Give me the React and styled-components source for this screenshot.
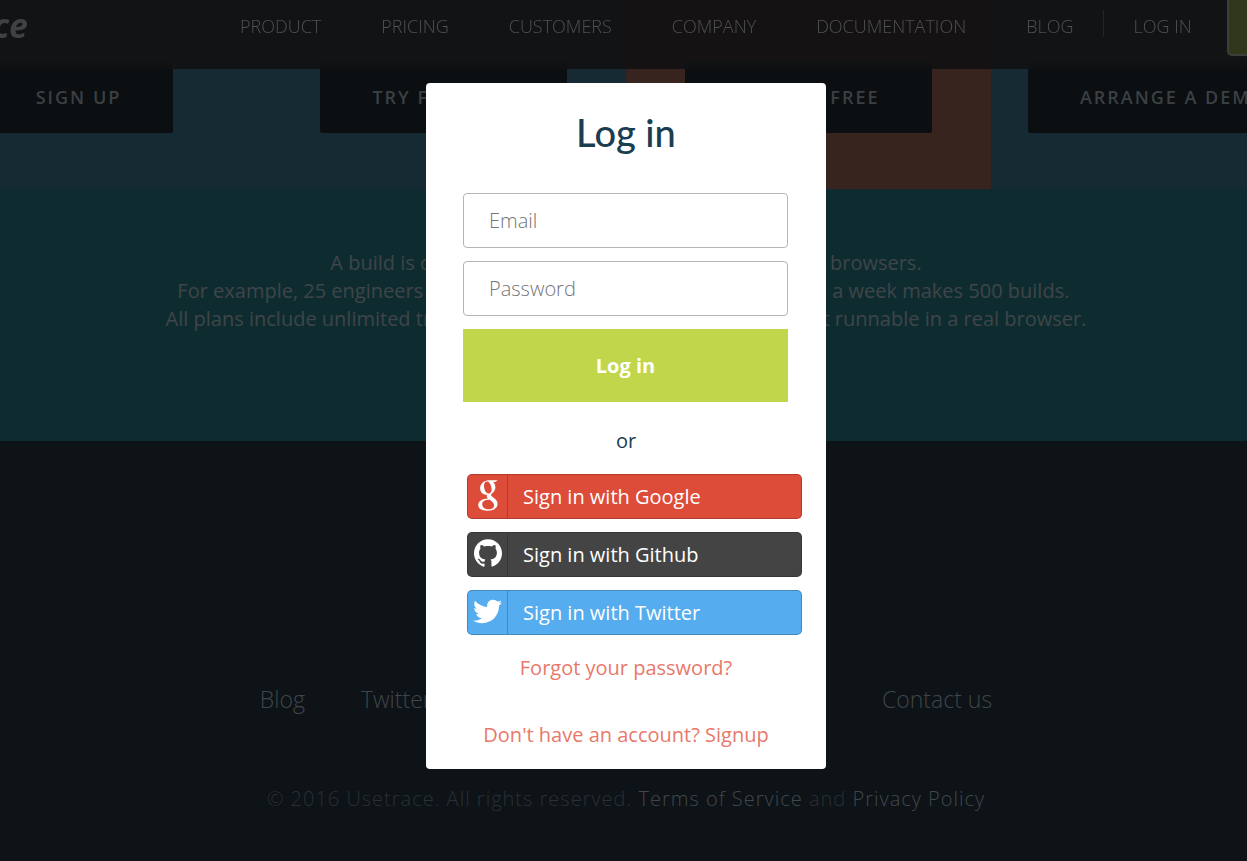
import React from 'react';
import styled, { createGlobalStyle, css } from 'styled-components';
import { SiGithub } from 'react-icons/si';
import { FaTwitter } from 'react-icons/fa';

const navItems = ['Product', 'Pricing', 'Customers', 'Company', 'Documentation', 'Blog'];

const plans = [
	{ action: 'Sign up' },
	{ action: 'Try for free' },
	{ action: 'Try for free', highlighted: true },
	{ action: 'Arrange a demo' },
];

const footerLinks = ['Blog', 'Twitter', 'Instagram', 'Customer Stories', 'Contact us'];

const GoogleIcon = () => (
	<svg width="20" height="31" viewBox="0 0 20 31" aria-hidden="true">
		<path
			fill="#fff"
			fillRule="evenodd"
			d="M19.7 .2 L17.4 2 H15 C16.6 3.2 17.4 5 17.4 7.2 C17.4 9.9 16.1 11.6 14.5 12.9 C13.4 13.8 13.1 14.3 13.1 15 C13.1 15.8 13.8 16.4 15 17.3 C17.9 19.4 19.6 21.1 19.6 24.1 C19.6 27.8 15.9 30.8 9.6 30.8 C3.8 30.8 .2 28.5 .2 25 C.2 21.3 4 18.8 10 18.5 C9.3 17.8 8.8 17.1 8.8 16.2 C8.8 15.7 8.9 15.3 9.1 14.8 C5 15 2.1 12.1 2.1 8.3 C2.1 4 5.7 .2 10.9 .2 Z M9 1.5 C7.1 1.5 6 3.3 6 5.8 C6 9.4 7.8 13.6 10.5 13.6 C12.6 13.6 13.6 12 13.6 9.7 C13.6 6.2 11.8 1.5 9 1.5 Z M11.3 19.8 C7.2 19.8 4.2 21.1 4.2 24.2 C4.2 27.3 6.9 29.3 10.8 29.3 C14.1 29.3 16.1 27.8 16.1 25.5 C16.1 23.2 14.8 22 12.2 19.9 Z"
		/>
	</svg>
);

const providers = [
	{ name: 'Google', color: '#dd4b39', icon: <GoogleIcon /> },
	{ name: 'Github', color: '#444444', icon: <SiGithub size={28} /> },
	{ name: 'Twitter', color: '#55acee', icon: <FaTwitter size={29} /> },
];

const App = () => (
	<>
		<GlobalStyle />
		<Header>
			<Logo href="#">usetrace</Logo>
			<Nav>
				{navItems.map((item) => (
					<NavLink href="#" key={item}>{item}</NavLink>
				))}
			</Nav>
			<Divider />
			<NavLink href="#">Log in</NavLink>
			<TrialButton type="button" aria-label="Sign up" />
		</Header>
		<main>
			<Plans>
				{plans.map((plan, index) => (
					<Plan key={index} highlighted={plan.highlighted}>
						<PlanButton type="button">{plan.action}</PlanButton>
					</Plan>
				))}
			</Plans>
			<Info>
				A build is one batch of traces run in one or more web browsers.<br />
				For example, 25 engineers committing new code 4 times a day, 5 days a week makes 500 builds.&nbsp;<br />
				All plans include unlimited traces. A trace is an automated testing script runnable in a real browser.
			</Info>
		</main>
		<Footer>
			<FooterNav>
				{footerLinks.map((link) => (
					<FooterLink href="#" key={link}>{link}</FooterLink>
				))}
			</FooterNav>
			<Copyright>
				© 2016 Usetrace. All rights reserved. <LegalLink href="#">Terms of Service</LegalLink> and{' '}
				<LegalLink href="#">Privacy Policy</LegalLink>
			</Copyright>
		</Footer>
		<Overlay>
			<Modal role="dialog" aria-labelledby="login-title">
				<Title id="login-title">Log in</Title>
				<Form onSubmit={(event) => event.preventDefault()}>
					<Input type="email" placeholder="Email" aria-label="Email" />
					<Input type="password" placeholder="Password" aria-label="Password" />
					<SubmitButton type="submit">Log in</SubmitButton>
				</Form>
				<Or>or</Or>
				<Providers>
					{providers.map(({ name, color, icon }) => (
						<ProviderButton type="button" color={color} key={name}>
							<ProviderIcon>{icon}</ProviderIcon>
							Sign in with {name}
						</ProviderButton>
					))}
				</Providers>
				<ModalLinks>
					<ModalLink href="#">Forgot your password?</ModalLink>
					<ModalLink href="#">Don't have an account? Signup</ModalLink>
				</ModalLinks>
			</Modal>
		</Overlay>
	</>
);

const GlobalStyle = createGlobalStyle`
	* {
		box-sizing: border-box;
	}

	body {
		margin: 0;
		background-color: #0d1317;
		font-family: 'Open Sans', sans-serif;
		overflow: hidden;
	}

	button, input {
		font-family: inherit;
	}

	a {
		text-decoration: none;
	}
`;

const Header = styled.header`
	position: fixed;
	top: 0;
	left: 0;
	right: 0;
	z-index: 1;
	display: flex;
	height: 69px;
	padding-top: 10px;
	background-color: rgba(17, 17, 18, 0.92);
`;

const Logo = styled.a`
	display: flex;
	justify-content: flex-end;
	width: 28px;
	margin-right: 212px;
	overflow: hidden;
	font-size: 34px;
	font-style: italic;
	font-weight: 700;
	line-height: 30px;
	color: #404142;
`;

const Nav = styled.nav`
	display: flex;
	gap: 60px;
`;

const NavLink = styled.a`
	font-size: 18px;
	font-weight: 300;
	line-height: 32px;
	color: #505152;
	text-transform: uppercase;
	white-space: nowrap;
`;

const Divider = styled.div`
	width: 1px;
	height: 27px;
	margin: 0 29px 0 30px;
	background-color: #242526;
`;

const TrialButton = styled.button`
	flex: 1;
	height: 56px;
	margin: -10px 0 0 35px;
	padding: 0;
	border: solid #3c3e3a;
	border-width: 0 0 2px 2px;
	border-radius: 0 0 0 5px;
	background-color: #31371a;
`;

const Plans = styled.section`
	display: flex;
	justify-content: center;
	padding-left: 5px;
	overflow: hidden;
	background-color: #162a33;
`;

const Plan = styled.div`
	display: flex;
	flex: none;
	justify-content: center;
	width: 365px;
	padding: 62px 0 56px;
	${(props) => props.highlighted && css`
		background-color: #38241f;
	`}
`;

const PlanButton = styled.button`
	height: 71px;
	padding: 0 52px 2px;
	border: 0;
	border-radius: 2px;
	background-color: #0b0f12;
	font-size: 18px;
	font-weight: 600;
	letter-spacing: 2px;
	color: #3b4043;
	text-transform: uppercase;
	white-space: nowrap;
`;

const Info = styled.p`
	margin: 0;
	padding: 60px 0 108px 5px;
	background-color: #0e2c30;
	font-size: 20px;
	line-height: 28px;
	color: #3f4548;
	text-align: center;
`;

const Footer = styled.footer`
	padding: 240px 0 44px 5px;
	background-color: #0d1317;
	text-align: center;
`;

const FooterNav = styled.nav`
	display: flex;
	justify-content: center;
	gap: 56px;
	margin-bottom: 64px;
`;

const FooterLink = styled.a`
	font-size: 23px;
	font-weight: 300;
	line-height: 36px;
	color: #414548;
	white-space: nowrap;
`;

const Copyright = styled.p`
	margin: 0;
	font-size: 20px;
	font-weight: 300;
	line-height: 36px;
	letter-spacing: 1px;
	color: #2b3033;
`;

const LegalLink = styled.a`
	color: #43474a;
`;

const Overlay = styled.div`
	position: fixed;
	inset: 0;
	z-index: 2;
	display: flex;
	align-items: flex-start;
	justify-content: center;
	padding: 83px 0 0 5px;
`;

const Modal = styled.div`
	width: 400px;
	padding: 27px 0 19px;
	border-radius: 4px;
	background-color: #ffffff;
`;

const Title = styled.h2`
	margin: 0 0 39px;
	font-family: Lato, sans-serif;
	font-size: 38px;
	font-weight: 500;
	line-height: 44px;
	color: #1b3d50;
	text-align: center;
`;

const Form = styled.form`
	display: flex;
	flex-direction: column;
	gap: 13px;
	padding: 0 38px 0 37px;
`;

const Input = styled.input`
	height: 55px;
	padding: 0 25px;
	border: 1px solid #b5b5b5;
	border-radius: 4px;
	background-color: #ffffff;
	font-size: 20px;
	font-weight: 300;

	&::placeholder {
		color: #757575;
	}
`;

const SubmitButton = styled.button`
	height: 73px;
	border: 0;
	background-color: #c1d64a;
	font-size: 20px;
	font-weight: 700;
	color: #ffffff;
`;

const Or = styled.p`
	margin: 24px 0 18px;
	font-size: 20px;
	line-height: 30px;
	color: #1b3d50;
	text-align: center;
`;

const Providers = styled.div`
	display: flex;
	flex-direction: column;
	gap: 13px;
	padding: 0 24px 0 41px;
`;

const ProviderButton = styled.button`
	display: flex;
	align-items: center;
	gap: 15px;
	height: 45px;
	padding: 0;
	border: 1px solid rgba(0, 0, 0, 0.2);
	border-radius: 5px;
	background-color: ${(props) => props.color};
	font-size: 20px;
	color: #ffffff;
`;

const ProviderIcon = styled.span`
	display: flex;
	align-items: center;
	justify-content: center;
	width: 40px;
	height: 100%;
	padding-bottom: 3px;
	border-right: 1px solid rgba(0, 0, 0, 0.2);
`;

const ModalLinks = styled.div`
	display: flex;
	flex-direction: column;
	align-items: center;
	gap: 37px;
	margin-top: 18px;
`;

const ModalLink = styled.a`
	font-size: 20px;
	line-height: 30px;
	color: #e8796a;
`;

export default App;
